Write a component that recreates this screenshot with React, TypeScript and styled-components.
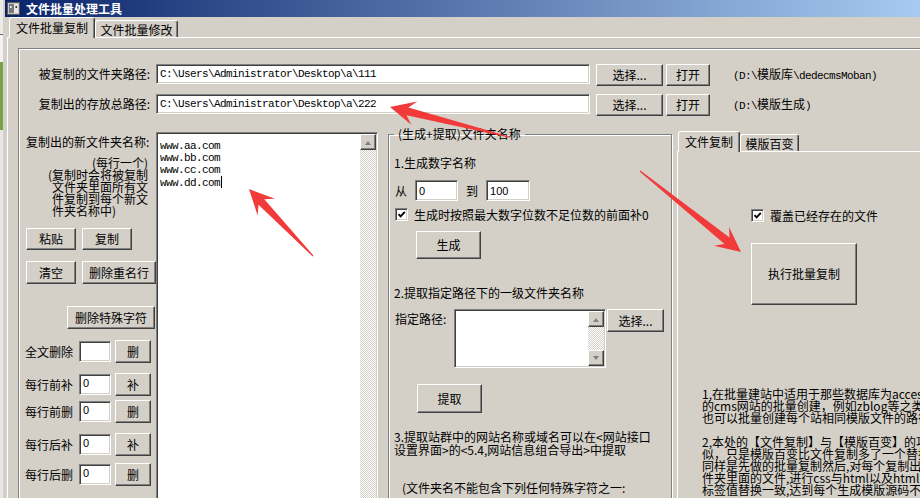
import React from 'react';
import styled, { createGlobalStyle, css } from 'styled-components';

const GlobalStyle = createGlobalStyle`
  html, body {
    margin: 0;
    padding: 0;
    background: #d4d0c8;
  }
  body {
    font-family: "Noto Sans CJK SC", "Noto Sans", sans-serif;
    font-size: 12px;
    color: #000;
  }
  * {
    box-sizing: border-box;
  }
`;

const CJK = `"Noto Sans CJK SC", "Noto Sans", sans-serif`;

const raised = css`
  border: 1px solid;
  border-color: #fff #404040 #404040 #fff;
  box-shadow: inset -1px -1px #808080;
  background: #d4d0c8;
`;

const sunken = css`
  border: 1px solid;
  border-color: #808080 #fff #fff #808080;
  box-shadow: inset 1px 1px #404040, inset -1px -1px #d4d0c8;
  background: #fff;
`;

const etched = css`
  border: 1px solid #808080;
  box-shadow: inset 1px 1px #fff, 1px 1px #fff;
`;

const Screen = styled.div`
  position: relative;
  display: flex;
  width: 920px;
  height: 498px;
  overflow: hidden;
  background: #d4d0c8;
`;

const BackWindow = styled.div`
  flex: 0 0 5px;
  background: linear-gradient(
    to bottom,
    #ecebe8 0 34px,
    #6b6b6b 34px 35px,
    #f2f2f2 35px 62px,
    #78a447 62px 130px,
    #e6e6e6 130px
  );
  border-right: 2px solid #d4d0c8;
`;

const Window = styled.div`
  flex: 0 0 1000px;
  display: flex;
  flex-direction: column;
`;

const TitleBar = styled.div`
  display: flex;
  align-items: center;
  gap: 6px;
  height: 17px;
  padding-left: 2px;
  background: linear-gradient(to right, #0a246a 0, #a6caf0 912px, #a6caf0);
  color: #fff;
  font-weight: bold;
  font-size: 12px;
  line-height: 17px;
`;

const TabStrip = styled.div<{ $h: number; $pl: number }>`
  display: flex;
  align-items: flex-end;
  height: ${(p) => p.$h}px;
  padding-left: ${(p) => p.$pl}px;
`;

const Tab = styled.div<{ $active?: boolean; $w: number }>`
  position: relative;
  display: flex;
  align-items: center;
  justify-content: center;
  width: ${(p) => p.$w}px;
  height: ${(p) => (p.$active ? 21 : 17)}px;
  margin-bottom: ${(p) => (p.$active ? -1 : 0)}px;
  border: 1px solid;
  border-bottom: none;
  border-color: #fff #404040 transparent #fff;
  border-radius: 3px 3px 0 0;
  box-shadow: inset -1px 0 #808080;
  background: #d4d0c8;
  font-size: 12px;
  line-height: 12px;
  z-index: ${(p) => (p.$active ? 2 : 1)};
  padding-top: ${(p) => (p.$active ? 0 : 1)}px;
`;

const TabPanel = styled.div`
  flex: 1;
  margin-left: 2px;
  padding: 10px 0 0 10px;
  border-top: 1px solid #fff;
  border-left: 1px solid #fff;
`;

const Frame = styled.div`
  height: 460px;
  padding: 15px 0 0 1px;
  border-top: 1px solid #808080;
  border-left: 1px solid #808080;
  box-shadow: inset 1px 1px #fff;
`;

const PathRow = styled.div<{ $mt?: number }>`
  display: flex;
  align-items: flex-start;
  margin-top: ${(p) => p.$mt ?? 0}px;
  height: 22px;
`;

const PathLabel = styled.div`
  width: 130px;
  margin-right: 6px;
  text-align: right;
  line-height: 20px;
  white-space: nowrap;
`;

const Field = styled.div<{ $w: number; $h?: number; $center?: boolean }>`
  ${sunken};
  flex: none;
  display: flex;
  align-items: ${(p) => (p.$center ? 'center' : 'flex-start')};
  width: ${(p) => p.$w}px;
  height: ${(p) => p.$h ?? 20}px;
  padding: ${(p) => (p.$center ? '0 3px' : '2px 3px')};
  font-family: "Liberation Sans", Arial, sans-serif;
  font-size: 11px;
  line-height: 12px;
  white-space: nowrap;
  overflow: hidden;
`;

const Mono = styled.span`
  font-family: "Liberation Mono", "Courier New", monospace;
  font-size: 11px;
  letter-spacing: -0.6px;
`;

const ButtonPair = styled.div`
  display: flex;
  gap: 3px;
  margin-left: 6px;
`;

const Button = styled.button<{ $w: number; $h?: number; $ml?: number; $mt?: number }>`
  ${raised};
  flex: none;
  width: ${(p) => p.$w}px;
  height: ${(p) => p.$h ?? 22}px;
  margin: ${(p) => p.$mt ?? 0}px 0 0 ${(p) => p.$ml ?? 0}px;
  padding: 0;
  font-family: ${CJK};
  font-size: 12px;
  line-height: 12px;
  color: #000;
  white-space: nowrap;
`;

const Hint = styled.div`
  margin-left: 23px;
  line-height: 20px;
  white-space: nowrap;
`;

const Main = styled.div`
  display: flex;
  align-items: flex-start;
  margin-top: 11px;
`;

const LeftColumn = styled.div`
  flex: 0 0 136px;
  display: flex;
  flex-direction: column;
`;

const Heading = styled.div<{ $mt: number; $pl: number }>`
  margin-top: ${(p) => p.$mt}px;
  padding-left: ${(p) => p.$pl}px;
  line-height: 12px;
  white-space: nowrap;
`;

const Note = styled.div`
  margin-top: 9px;
  padding-left: 28px;
  line-height: 12px;
`;

const NoteLine = styled.div<{ $indent?: number; $right?: boolean }>`
  padding-left: ${(p) => p.$indent ?? 0}px;
  padding-right: ${(p) => (p.$right ? 8 : 0)}px;
  text-align: ${(p) => (p.$right ? 'right' : 'left')};
  white-space: nowrap;
`;

const ButtonRow = styled.div<{ $mt: number }>`
  display: flex;
  gap: 6px;
  margin-top: ${(p) => p.$mt}px;
  padding-left: 6px;
`;

const EditRow = styled.div<{ $mt: number }>`
  display: flex;
  align-items: center;
  height: 23px;
  margin-top: ${(p) => p.$mt}px;
  padding-left: 5px;
`;

const EditLabel = styled.div`
  width: 54px;
  line-height: 12px;
  white-space: nowrap;
`;

const TextBox = styled.div<{ $w: number; $h: number; $mt?: number }>`
  ${sunken};
  flex: none;
  display: flex;
  width: ${(p) => p.$w}px;
  height: ${(p) => p.$h}px;
  margin-top: ${(p) => p.$mt ?? 0}px;
  padding: 1px;
`;

const NameList = styled.div`
  flex: 1;
  padding: 6px 2px 2px;
  font-family: "Liberation Mono", "Courier New", monospace;
  font-size: 11px;
  letter-spacing: -0.6px;
  line-height: 12px;
`;

const Caret = styled.span`
  display: inline-block;
  width: 1px;
  height: 12px;
  margin-left: 1px;
  vertical-align: -2px;
  background: #000;
`;

const ScrollBar = styled.div`
  flex: 0 0 16px;
  display: flex;
  flex-direction: column;
  justify-content: space-between;
  background: repeating-conic-gradient(#fff 0 25%, #d4d0c8 0 50%) 0 0 / 2px 2px;
`;

const ScrollButton = styled.div`
  ${raised};
  display: flex;
  align-items: center;
  justify-content: center;
  width: 16px;
  height: 16px;
`;

const GroupBox = styled.fieldset`
  ${etched};
  flex: none;
  width: 284px;
  height: 400px;
  min-width: 0;
  margin: 0 0 0 10px;
  padding: 0 0 0 5px;
`;

const Legend = styled.legend`
  padding: 0 4px;
  line-height: 14px;
  white-space: nowrap;
`;

const Line = styled.div<{ $mt: number; $pl?: number; $lh?: number }>`
  margin-top: ${(p) => p.$mt}px;
  padding-left: ${(p) => p.$pl ?? 0}px;
  line-height: ${(p) => p.$lh ?? 12}px;
  white-space: nowrap;
`;

const RangeRow = styled.div`
  display: flex;
  align-items: center;
  gap: 8px;
  height: 21px;
  margin-top: 11px;
  padding-left: 1px;
`;

const CheckRow = styled.label<{ $mt: number; $ml: number }>`
  display: flex;
  align-items: center;
  gap: 6px;
  height: 13px;
  margin: ${(p) => p.$mt}px 0 0 ${(p) => p.$ml}px;
  line-height: 12px;
  white-space: nowrap;
`;

const CheckBox = styled.span`
  ${sunken};
  display: flex;
  align-items: center;
  justify-content: center;
  width: 13px;
  height: 13px;
`;

const FolderRow = styled.div`
  display: flex;
  align-items: flex-start;
  margin-top: 10px;
  padding-left: 1px;
`;

const FolderLabel = styled.div`
  width: 59px;
  margin-top: 4px;
  line-height: 12px;
  white-space: nowrap;
`;

const RightPanel = styled.div`
  flex: none;
  display: flex;
  flex-direction: column;
  width: 400px;
  margin: 4px 0 0 5px;
`;

const RightBody = styled.div`
  height: 360px;
  border-top: 1px solid #fff;
  border-left: 1px solid #fff;
  display: flex;
  flex-direction: column;
`;

const HelpText = styled.div`
  margin: 83px 0 0 24px;
  line-height: 12px;
  white-space: nowrap;
`;

const ArrowLayer = styled.svg`
  position: absolute;
  left: 0;
  top: 0;
  pointer-events: none;
`;

type Arrow = { tail: [number, number]; tip: [number, number] };

const arrows: Arrow[] = [
  { tail: [509, 137], tip: [390, 107] },
  { tail: [313, 256], tip: [249, 189] },
  { tail: [640, 171], tip: [741, 252] },
];

const arrowPoints = ({ tail, tip }: Arrow) => {
  const [x1, y1] = tail;
  const [x2, y2] = tip;
  const len = Math.hypot(x2 - x1, y2 - y1);
  const ux = (x2 - x1) / len;
  const uy = (y2 - y1) / len;
  const at = (d: number, w: number) =>
    `${(x2 - ux * d - uy * w).toFixed(1)},${(y2 - uy * d + ux * w).toFixed(1)}`;
  return [
    at(len, 0.6),
    at(18, 4),
    at(25, 12),
    at(0, 0),
    at(25, -12),
    at(18, -4),
    at(len, -0.6),
  ].join(' ');
};

const UpArrow = () => (
  <svg width="8" height="5" viewBox="0 0 8 5">
    <polygon points="1,5 4,1 7,5" fill="#808080" />
  </svg>
);

const DownArrow = () => (
  <svg width="8" height="5" viewBox="0 0 8 5">
    <polygon points="1,0 4,4 7,0" fill="#808080" />
  </svg>
);

const Check = () => (
  <svg width="9" height="9" viewBox="0 0 9 9">
    <path d="M1.5 4.2 L3.6 6.4 L7.8 1.8" stroke="#000" strokeWidth="1.9" fill="none" />
  </svg>
);

const AppIcon = () => (
  <svg width="13" height="13" viewBox="0 0 13 13">
    <rect x="0.5" y="0.5" width="12" height="12" fill="#c8c8c8" stroke="#5a5a5a" />
    <rect x="2" y="2" width="5" height="9" fill="#7a7a7a" />
    <rect x="7" y="2" width="4" height="9" fill="#e8e8e8" />
    <rect x="3" y="4" width="1.5" height="2" fill="#fff" />
    <rect x="8.5" y="4" width="1.5" height="2" fill="#333" />
  </svg>
);

const editRows = [
  { label: '全文删除', value: '', action: '删', mt: 11 },
  { label: '每行前补', value: '0', action: '补', mt: 10 },
  { label: '每行前删', value: '0', action: '删', mt: 4 },
  { label: '每行后补', value: '0', action: '补', mt: 10 },
  { label: '每行后删', value: '0', action: '删', mt: 7 },
];

const names = ['www.aa.com', 'www.bb.com', 'www.cc.com', 'www.dd.com'];

const helpLines = [
  '1,在批量建站中适用于那些数据库为access',
  '的cms网站的批量创建，例如zblog等之类的',
  '也可以批量创建每个站相同模版文件的路径',
  '',
  '2,本处的【文件复制】与【模版百变】的功能类',
  '似，只是模版百变比文件复制多了一个替换功能',
  '同样是先做的批量复制然后,对每个复制出来的文',
  '件夹里面的文件,进行css与html以及html中的',
  '标签值替换一致,达到每个生成模版源码不同',
];

export default function App() {
  return (
    <>
      <GlobalStyle />
      <Screen>
        <BackWindow />
        <Window>
          <TitleBar>
            <AppIcon />
            <span>文件批量处理工具</span>
          </TitleBar>
          <TabStrip $h={24} $pl={4}>
            <Tab $active $w={86}>文件批量复制</Tab>
            <Tab $w={83}>文件批量修改</Tab>
          </TabStrip>
          <TabPanel>
            <Frame>
              <PathRow>
                <PathLabel>被复制的文件夹路径:</PathLabel>
                <Field $w={434} $center>
                  <Mono>{'C:\\Users\\Administrator\\Desktop\\a\\111'}</Mono>
                </Field>
                <ButtonPair>
                  <Button $w={67}>选择...</Button>
                  <Button $w={44}>打开</Button>
                </ButtonPair>
                <Hint>
                  <Mono>{'(D:\\'}</Mono>模版库<Mono>{'\\dedecmsMoban)'}</Mono>
                </Hint>
              </PathRow>
              <PathRow $mt={8}>
                <PathLabel>复制出的存放总路径:</PathLabel>
                <Field $w={434} $center>
                  <Mono>{'C:\\Users\\Administrator\\Desktop\\a\\222'}</Mono>
                </Field>
                <ButtonPair>
                  <Button $w={67}>选择...</Button>
                  <Button $w={44}>打开</Button>
                </ButtonPair>
                <Hint>
                  <Mono>{'(D:\\'}</Mono>模版生成<Mono>)</Mono>
                </Hint>
              </PathRow>

              <Main>
                <LeftColumn>
                  <Heading $mt={9} $pl={6}>复制出的新文件夹名称:</Heading>
                  <Note>
                    <NoteLine $right>(每行一个)</NoteLine>
                    <NoteLine>(复制时会将被复制</NoteLine>
                    <NoteLine $indent={4}>文件夹里面所有文</NoteLine>
                    <NoteLine $indent={4}>件复制到每个新文</NoteLine>
                    <NoteLine $indent={4}>件夹名称中)</NoteLine>
                  </Note>
                  <ButtonRow $mt={11}>
                    <Button $w={50}>粘贴</Button>
                    <Button $w={50}>复制</Button>
                  </ButtonRow>
                  <ButtonRow $mt={11}>
                    <Button $w={50} $h={23}>清空</Button>
                    <Button $w={74} $h={23}>删除重名行</Button>
                  </ButtonRow>
                  <Button $w={88} $h={23} $ml={47} $mt={22}>删除特殊字符</Button>
                  {editRows.map((row) => (
                    <EditRow key={row.label} $mt={row.mt}>
                      <EditLabel>{row.label}</EditLabel>
                      <Field $w={32} $h={21}>{row.value}</Field>
                      <Button $w={36} $h={23} $ml={4}>{row.action}</Button>
                    </EditRow>
                  ))}
                </LeftColumn>

                <TextBox $w={222} $h={380} $mt={5}>
                  <NameList>
                    {names.map((n, i) => (
                      <div key={n}>
                        {n}
                        {i === names.length - 1 && <Caret />}
                      </div>
                    ))}
                  </NameList>
                  <ScrollBar>
                    <ScrollButton>
                      <UpArrow />
                    </ScrollButton>
                  </ScrollBar>
                </TextBox>

                <GroupBox>
                  <Legend>(生成+提取)文件夹名称</Legend>
                  <Line $mt={16}>1.生成数字名称</Line>
                  <RangeRow>
                    <span>从</span>
                    <Field $w={43} $h={21} $center>0</Field>
                    <span>到</span>
                    <Field $w={44} $h={21} $center>100</Field>
                  </RangeRow>
                  <CheckRow $mt={7} $ml={1}>
                    <CheckBox>
                      <Check />
                    </CheckBox>
                    生成时按照最大数字位数不足位数的前面补0
                  </CheckRow>
                  <Button $w={65} $h={28} $ml={22} $mt={10}>生成</Button>
                  <Line $mt={28}>2.提取指定路径下的一级文件夹名称</Line>
                  <FolderRow>
                    <FolderLabel>指定路径:</FolderLabel>
                    <TextBox $w={152} $h={59}>
                      <NameList />
                      <ScrollBar>
                        <ScrollButton>
                          <UpArrow />
                        </ScrollButton>
                        <ScrollButton>
                          <DownArrow />
                        </ScrollButton>
                      </ScrollBar>
                    </TextBox>
                    <Button $w={57} $h={23} $ml={1}>选择...</Button>
                  </FolderRow>
                  <Button $w={65} $h={29} $ml={23} $mt={16}>提取</Button>
                  <Line $mt={17} $lh={13}>
                    3.提取站群中的网站名称或域名可以在&lt;网站接口
                    <br />
                    设置界面&gt;的&lt;5.4,网站信息组合导出&gt;中提取
                  </Line>
                  <Line $mt={26} $pl={8}>(文件夹名不能包含下列任何特殊字符之一:</Line>
                </GroupBox>

                <RightPanel>
                  <TabStrip $h={20} $pl={1}>
                    <Tab $active $w={62}>文件复制</Tab>
                    <Tab $w={59}>模版百变</Tab>
                  </TabStrip>
                  <RightBody>
                    <CheckRow $mt={57} $ml={73}>
                      <CheckBox>
                        <Check />
                      </CheckBox>
                      覆盖已经存在的文件
                    </CheckRow>
                    <Button $w={106} $h={62} $ml={73} $mt={21}>执行批量复制</Button>
                    <HelpText>
                      {helpLines.map((l, i) => (
                        <div key={i}>{l || '\u00a0'}</div>
                      ))}
                    </HelpText>
                  </RightBody>
                </RightPanel>
              </Main>
            </Frame>
          </TabPanel>
        </Window>
        <ArrowLayer width={920} height={498} viewBox="0 0 920 498">
          {arrows.map((a, i) => (
            <polygon key={i} points={arrowPoints(a)} fill="#f23a3a" />
          ))}
        </ArrowLayer>
      </Screen>
    </>
  );
}
